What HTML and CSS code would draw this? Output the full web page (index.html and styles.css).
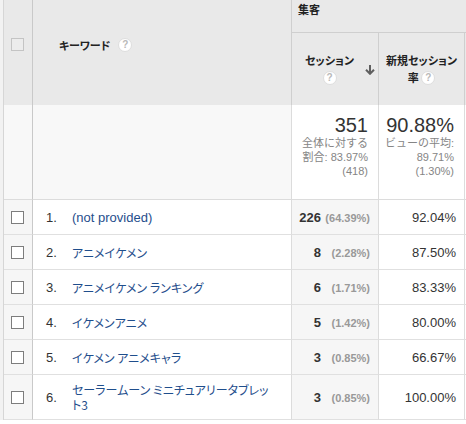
FILE: index.html
```html
<!DOCTYPE html>
<html lang="ja">
<head>
<meta charset="utf-8">
<title>キーワード レポート</title>
<link rel="stylesheet" href="styles.css">
</head>
<body>
<div class="frame">
<table class="report">
  <colgroup>
    <col class="c-check"><col class="c-key"><col class="c-sess"><col class="c-rate"><col class="c-extra">
  </colgroup>
  <thead>
    <tr class="h-group">
      <th class="th-check" rowspan="2"><span class="cb cb-head"></span></th>
      <th class="th-key" rowspan="2"><span class="hlabel">キーワード</span><span class="help">?</span></th>
      <th class="th-group" colspan="3">集客</th>
    </tr>
    <tr class="h-metrics">
      <th class="th-metric">
        <div class="mhead">
          <div class="mtext">セッション<br><span class="help">?</span></div>
          <svg class="sort" width="10" height="10" viewBox="0 0 10 10"><path d="M5 0V8.5M1 4.8L5 8.8L9 4.8" fill="none" stroke="#5f5f5f" stroke-width="2"/></svg>
        </div>
      </th>
      <th class="th-metric">
        <div class="mtext">新規セッション<br>率 <span class="help">?</span></div>
      </th>
      <th class="th-extra"></th>
    </tr>
  </thead>
  <tbody>
    <tr class="summary">
      <td class="cell-check"></td>
      <td class="cell-key"></td>
      <td class="sum">
        <div class="big">351</div>
        <div class="sub">全体に対する<br>割合: 83.97%<br>(418)</div>
      </td>
      <td class="sum">
        <div class="big">90.88%</div>
        <div class="sub">ビューの平均:<br>89.71%<br>(1.30%)</div>
      </td>
      <td class="cell-extra"></td>
    </tr>
    <tr class="row">
      <td class="cell-check"><span class="cb"></span></td>
      <td class="cell-key"><div class="kw"><span class="num">1.</span><a class="link">(not provided)</a></div></td>
      <td class="cell-sess"><span class="val">226</span><span class="pct">(64.39%)</span></td>
      <td class="cell-rate">92.04%</td>
      <td class="cell-extra"></td>
    </tr>
    <tr class="row">
      <td class="cell-check"><span class="cb"></span></td>
      <td class="cell-key"><div class="kw"><span class="num">2.</span><a class="link ja">アニメイケメン</a></div></td>
      <td class="cell-sess"><span class="val">8</span><span class="pct">(2.28%)</span></td>
      <td class="cell-rate">87.50%</td>
      <td class="cell-extra"></td>
    </tr>
    <tr class="row">
      <td class="cell-check"><span class="cb"></span></td>
      <td class="cell-key"><div class="kw"><span class="num">3.</span><a class="link ja">アニメイケメン ランキング</a></div></td>
      <td class="cell-sess"><span class="val">6</span><span class="pct">(1.71%)</span></td>
      <td class="cell-rate">83.33%</td>
      <td class="cell-extra"></td>
    </tr>
    <tr class="row">
      <td class="cell-check"><span class="cb"></span></td>
      <td class="cell-key"><div class="kw"><span class="num">4.</span><a class="link ja">イケメンアニメ</a></div></td>
      <td class="cell-sess"><span class="val">5</span><span class="pct">(1.42%)</span></td>
      <td class="cell-rate">80.00%</td>
      <td class="cell-extra"></td>
    </tr>
    <tr class="row">
      <td class="cell-check"><span class="cb"></span></td>
      <td class="cell-key"><div class="kw"><span class="num">5.</span><a class="link ja">イケメン アニメキャラ</a></div></td>
      <td class="cell-sess"><span class="val">3</span><span class="pct">(0.85%)</span></td>
      <td class="cell-rate">66.67%</td>
      <td class="cell-extra"></td>
    </tr>
    <tr class="row row-tall">
      <td class="cell-check"><span class="cb"></span></td>
      <td class="cell-key"><div class="kw"><span class="num">6.</span><a class="link ja">セーラームーン ミニチュアリータブレット3</a></div></td>
      <td class="cell-sess"><span class="val">3</span><span class="pct">(0.85%)</span></td>
      <td class="cell-rate">100.00%</td>
      <td class="cell-extra"></td>
    </tr>
  </tbody>
</table>
</div>
</body>
</html>
```

FILE: styles.css
```css
* { box-sizing: border-box; }
html, body { margin: 0; padding: 0; background: #fff; }
body {
  width: 466px;
  height: 424px;
  overflow: hidden;
  font-family: "Liberation Sans", Arial, "Noto Sans CJK JP", sans-serif;
  color: #333;
}
.frame { border-left: 3px solid #f2f2f2; width: 466px; overflow: hidden; }

.report {
  border-collapse: separate;
  border-spacing: 0;
  table-layout: fixed;
  width: 482px;
  border-left: 1px solid #d6d6d6;
}
.c-check { width: 29px; }
.c-key { width: 259px; }
.c-sess { width: 87px; }
.c-rate { width: 86px; }
.c-extra { width: 21px; }

th, td { padding: 0; border-right: 1px solid #dcdcdc; }

/* header */
thead th {
  background: #e9e9e9;
  font-family: "Noto Sans CJK JP", sans-serif;
  font-feature-settings: "palt";
  font-weight: bold;
  font-size: 11px;
  color: #222;
  line-height: 17px;
  border-right-color: #cfcfcf;
}
.th-check { vertical-align: top; padding-top: 38px; border-right-color: #c9c9c9; }
.th-key { vertical-align: top; text-align: left; padding: 35px 0 0 26px; }
.hlabel { vertical-align: middle; }
.h-group .th-group {
  height: 33px;
  vertical-align: top;
  text-align: left;
  padding: 1px 0 0 6px;
  border-right: none;
  border-bottom: 1px solid #cfcfcf;
}
.h-metrics th { height: 72px; vertical-align: middle; text-align: center; }
.h-metrics .th-extra { border-right: none; }
.mhead { display: flex; align-items: center; }
.mhead .mtext { flex: 1; padding-left: 4px; }
.sort { flex: none; margin: 2px 3px 0 2px; }
.mtext { text-align: center; }

.help {
  display: inline-block;
  width: 14px;
  height: 14px;
  border-radius: 50%;
  background: #fff;
  border: 1px solid #dedede;
  color: #b9b9b9;
  font-family: "Liberation Sans", Arial, sans-serif;
  font-size: 10px;
  font-weight: bold;
  line-height: 12px;
  text-align: center;
  vertical-align: middle;
}
.th-key .help { margin-left: 8px; }
.th-metric .help { margin-top: -2px; }

/* checkbox */
.cb {
  display: block;
  width: 13px;
  height: 13px;
  margin-left: 7px;
  border: 1px solid #7d7d7d;
  background: #fff;
}
.cb-head { border-color: #c4c4c4; background: #ececec; }

/* summary */
.summary td {
  height: 95px;
  border-bottom: 1px solid #dcdcdc;
  vertical-align: top;
}
.summary .cell-check, .summary .cell-key { background: #f8f8f8; }
.summary .cell-check { border-right-color: #c9c9c9; }
.sum { text-align: right; padding: 9px 10px 0 0; background: #fff; }
.big { font-size: 20px; line-height: 22px; color: #333; }
.sub { font-size: 11px; line-height: 14px; color: #858585; }

/* data rows */
.row td {
  height: 35px;
  border-bottom: 1px solid #e0e0e0;
  vertical-align: middle;
  font-size: 13px;
}
.row-tall td { height: 45px; }
.row .cell-check { background: #f6f6f6; border-right-color: #c9c9c9; }
.kw { display: flex; align-items: center; padding-left: 13px; }
.num { flex: none; width: 26px; color: #333; }
.link { color: #1f4e8c; text-decoration: none; max-width: 202px; line-height: 15px; }
.link.ja { font-family: "Noto Sans CJK JP", sans-serif; font-size: 12px; font-feature-settings: "palt"; }
.cell-sess { background: #f6f6f6; text-align: right; padding-right: 8px; white-space: nowrap; }
.val { font-weight: bold; color: #333; }
.pct { display: inline-block; width: 49px; text-align: right; font-size: 11px; font-weight: bold; color: #999; }
.cell-rate { text-align: right; padding-right: 8px; color: #333; }
.cell-extra { border-right: none; }
```
